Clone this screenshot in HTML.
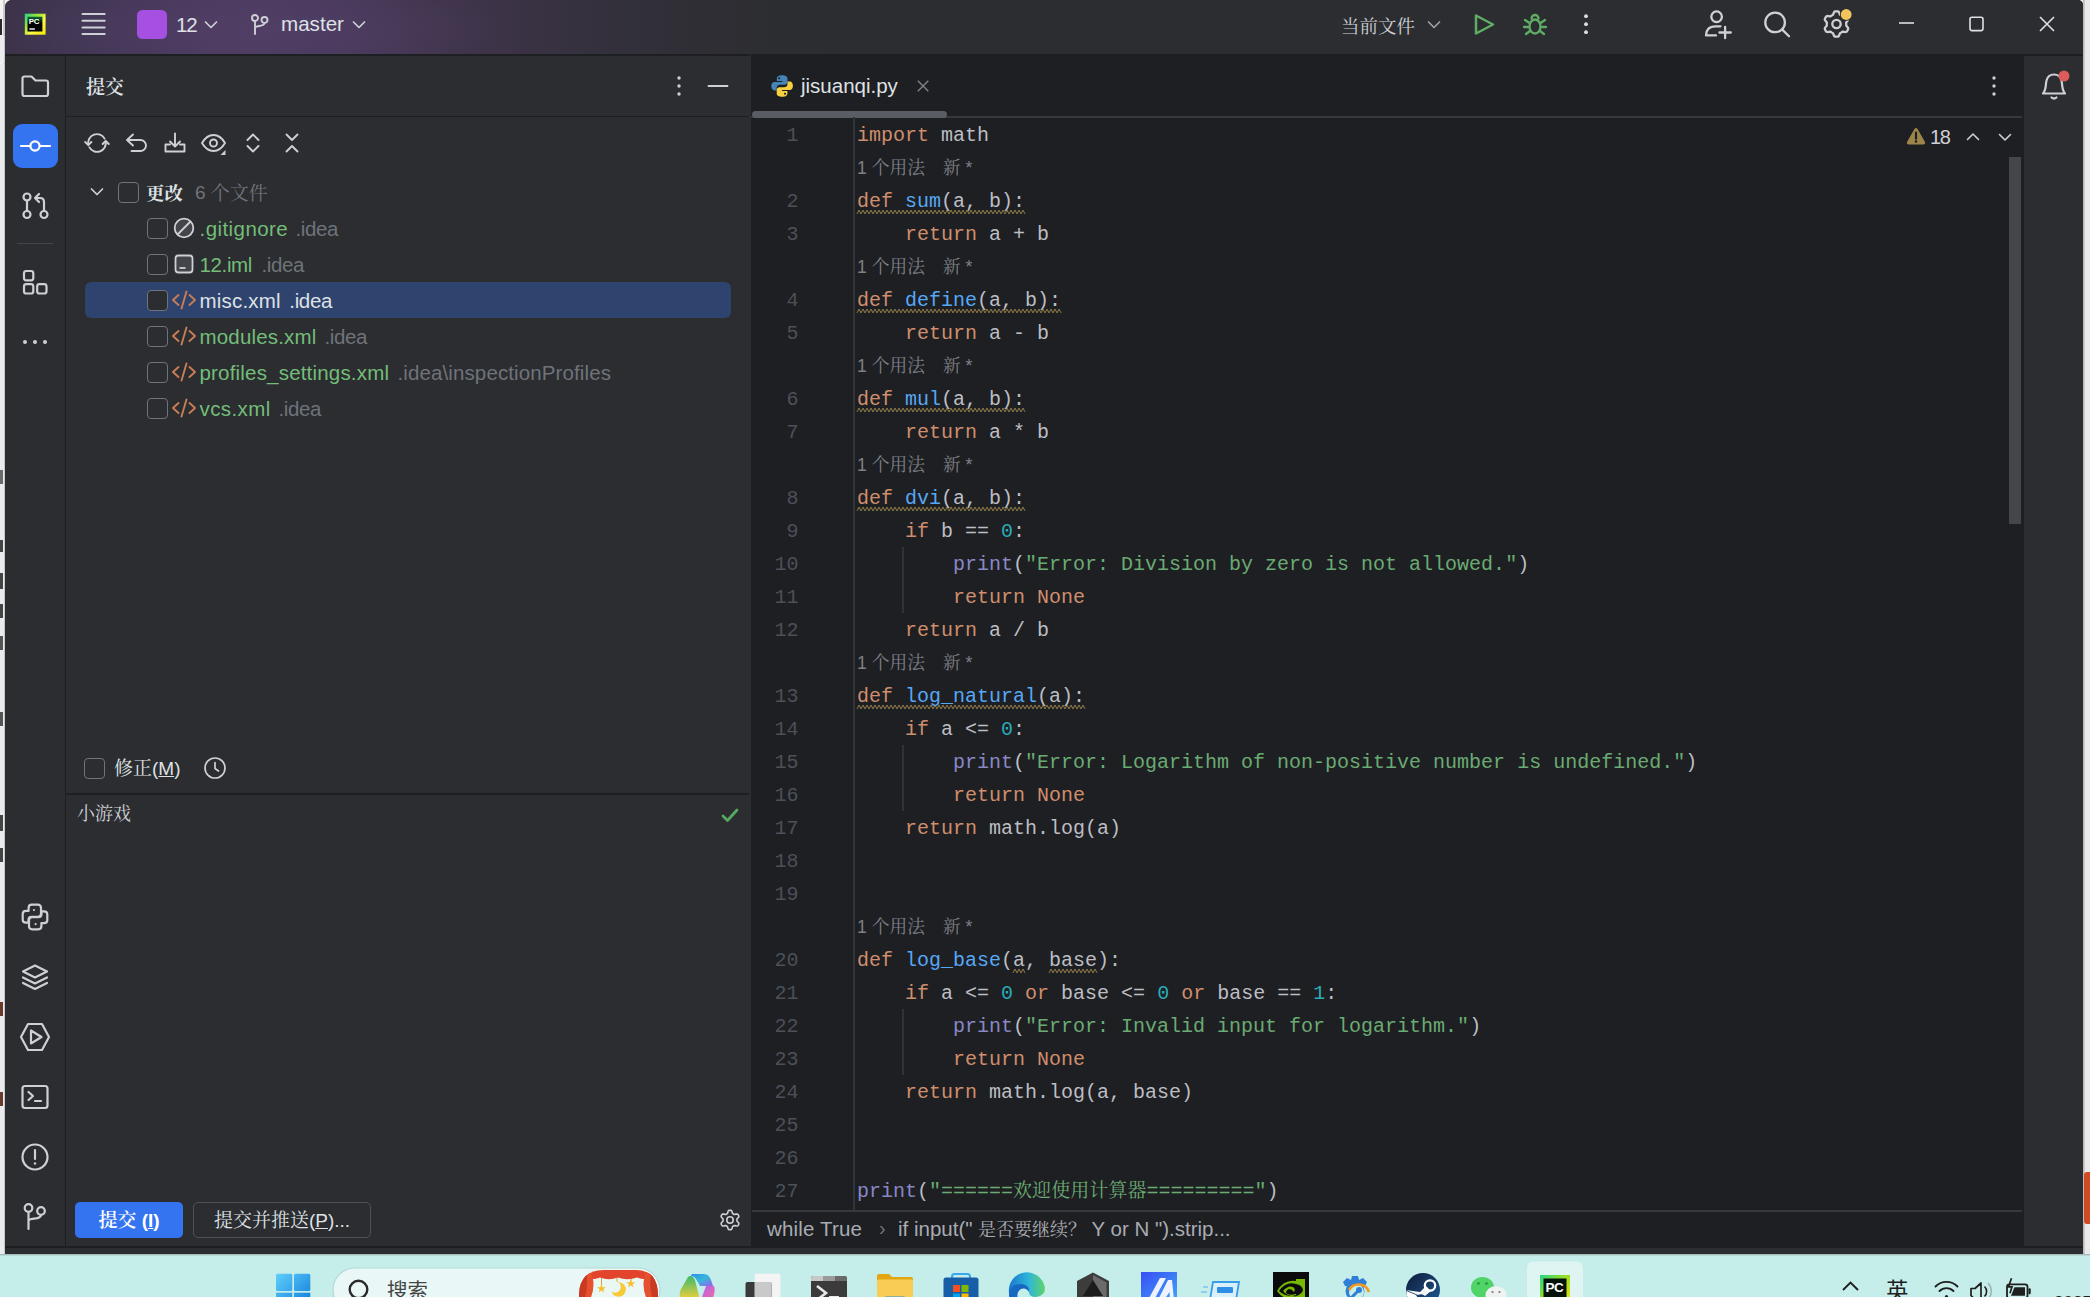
<!DOCTYPE html>
<html lang="zh-CN">
<head>
<meta charset="utf-8">
<title>12 – jisuanqi.py</title>
<style>
*{box-sizing:border-box;margin:0;padding:0}
html,body{width:2090px;height:1298px;overflow:hidden}
body{position:relative;background:#c6eeeb;font-family:"Liberation Sans","Noto Serif CJK SC",sans-serif;font-size:20.5px;color:#dfe1e5}
.abs{position:absolute}
svg{position:absolute;overflow:visible}
.ic{fill:none;stroke:#ced0d6;stroke-linecap:round;stroke-linejoin:round}
#deskL{left:0;top:0;width:14px;height:1254px;background:linear-gradient(90deg,#f4f4f4 0,#f4f4f4 3.500px,#cfcfcf 3.500px,#c4c4c4 5px,#f4f4f4 5px)}
#deskR{left:2070px;top:0;width:20px;height:1254px;background:linear-gradient(90deg,#e9e9e9 0,#e9e9e9 13px,#b4b4b4 13px,#cdcdcd 14.700px,#e9e9e9 14.700px)}
#win{left:5px;top:0;width:2078px;height:1254px;background:#2b2d30;border-radius:7px 5px 0 0;overflow:hidden}
#title{left:5px;top:0;width:2078px;height:54px;background:radial-gradient(ellipse 260px 40px at 245px 30px,rgba(84,64,106,.5) 0,rgba(84,64,106,0) 100%),linear-gradient(90deg,#3c3349 0,#3f3550 40px,#453858 120px,#4c3b60 200px,#4d3c61 260px,#493a5c 340px,#42364f 430px,#3a3244 520px,#33303b 610px,#2e2e34 710px,#2b2d30 820px)}
#strip{left:5px;top:54px;width:61px;height:1200px;background:#2b2d30;border-right:1px solid #1e1f22}
#commit{left:66px;top:54px;width:685px;height:1194px;background:#2b2d30}
#editor{left:751px;top:54px;width:1272px;height:1194px;background:#1e1f22}
#rstrip{left:2023px;top:54px;width:60px;height:1200px;background:#2b2d30;border-left:1px solid #1e1f22}
.t{position:absolute;white-space:pre;line-height:30px;height:30px}
.cjk{font-family:"Liberation Sans","Noto Serif CJK SC",serif}
.gray{color:#6f737a}
.green{color:#73bd79}
.cb{position:absolute;width:21px;height:21px;border:1.5px solid #6f737a;border-radius:4px;background:#2b2d30}
/* code */
#code{left:0;top:65px;width:1271px;height:1092px;font-family:"Liberation Mono","Noto Serif CJK SC",monospace;font-size:20px;color:#bcbec4}
.ln{position:absolute;left:0;width:1271px;height:33px;line-height:33px;white-space:pre}
.ln b{position:absolute;left:0;width:47.500px;text-align:right;font-weight:normal;color:#4b5059}
.ln i{position:absolute;left:106px;font-style:normal}
.k{color:#cf8e6d}.f{color:#56a8f5}.s{color:#6aab73}.n{color:#2aacb8}.p{color:#8888c6}
.h{font-family:"Liberation Sans","Noto Serif CJK SC",serif;font-size:17.700px;color:#7d8088}
.c{font-size:19px;letter-spacing:.07px}
.w{text-decoration:underline wavy #a68a4d 1px;text-underline-offset:5px}
</style>
</head>
<body>
<div id="deskL" class="abs"></div>
<div id="deskR" class="abs"></div>
<div class="abs" style="left:2084px;top:1172px;width:6px;height:52px;background:#d04a24;border-radius:3px 0 0 3px"></div>
<div class="abs" style="left:5px;top:54px;width:2078px;height:1.500px;background:#1e1f22;z-index:0"></div>
<div class="abs" style="left:0;top:19px;width:2px;height:16px;background:#2a2a2a"></div>
<div class="abs" style="left:0;top:145px;width:3.500px;height:3px;background:#222"></div>
<div class="abs" style="left:0;top:168px;width:3.500px;height:3px;background:#222"></div>
<div class="abs" style="left:0;top:334px;width:3px;height:15px;background:#2a3c6a"></div>
<div class="abs" style="left:0;top:36px;width:3.500px;height:27px;background:#ececef"></div>
<div class="abs" style="left:0;top:64px;width:3.500px;height:1190px;background:#ebebee"></div>
<div class="abs" style="left:0;top:470px;width:3px;height:14px;background:#6a6a6a"></div>
<div class="abs" style="left:0;top:540px;width:3px;height:12px;background:#444"></div>
<div class="abs" style="left:0;top:573px;width:3px;height:16px;background:#444"></div>
<div class="abs" style="left:0;top:604px;width:3px;height:14px;background:#444"></div>
<div class="abs" style="left:0;top:636px;width:3px;height:14px;background:#555"></div>
<div class="abs" style="left:0;top:712px;width:3px;height:14px;background:#555"></div>
<div class="abs" style="left:0;top:815px;width:3px;height:16px;background:#444"></div>
<div class="abs" style="left:0;top:848px;width:3px;height:14px;background:#444"></div>
<div class="abs" style="left:0;top:1002px;width:3px;height:14px;background:#6a3a2a"></div>
<div class="abs" style="left:0;top:1092px;width:3px;height:14px;background:#6a3a2a"></div>

<div id="win" class="abs"><div id="w" class="abs" style="left:-5px;top:0;width:2090px;height:1298px">
<div id="title" class="abs"></div>
<div id="strip" class="abs"></div>
<div id="commit" class="abs">
<!--COMMIT-->
</div>
<div id="editor" class="abs">
<div class="abs" style="left:0;top:62px;width:1271px;height:2px;background:#36383c"></div>
<div class="abs" style="left:1px;top:57px;width:195px;height:6.500px;border-radius:3.500px;background:#5a5d63"></div>
<div class="abs" style="left:102px;top:63px;width:2px;height:1094px;background:#313438"></div>
<div class="abs" style="left:151px;top:492.500px;width:2px;height:66px;background:#2f3236"></div>
<div class="abs" style="left:151px;top:690.500px;width:2px;height:66px;background:#2f3236"></div>
<div class="abs" style="left:151px;top:954.500px;width:2px;height:66px;background:#2f3236"></div>
<div class="abs" style="left:1258px;top:103px;width:12px;height:367px;background:#444649"></div>
<div id="code" class="abs">
<div class="ln" style="top:0px"><b>1</b><i><span class="k">import</span> math</i></div>
<div class="ln h" style="top:33px"><i>1 个用法</i><i style="left:192px">新 *</i></div>
<div class="ln" style="top:66px"><b>2</b><i><span class="k">def</span> <span class="f">sum</span>(a, b):</i></div>
<div class="ln" style="top:99px"><b>3</b><i>    <span class="k">return</span> a + b</i></div>
<div class="ln h" style="top:132px"><i>1 个用法</i><i style="left:192px">新 *</i></div>
<div class="ln" style="top:165px"><b>4</b><i><span class="k">def</span> <span class="f">define</span>(a, b):</i></div>
<div class="ln" style="top:198px"><b>5</b><i>    <span class="k">return</span> a - b</i></div>
<div class="ln h" style="top:231px"><i>1 个用法</i><i style="left:192px">新 *</i></div>
<div class="ln" style="top:264px"><b>6</b><i><span class="k">def</span> <span class="f">mul</span>(a, b):</i></div>
<div class="ln" style="top:297px"><b>7</b><i>    <span class="k">return</span> a * b</i></div>
<div class="ln h" style="top:330px"><i>1 个用法</i><i style="left:192px">新 *</i></div>
<div class="ln" style="top:363px"><b>8</b><i><span class="k">def</span> <span class="f">dvi</span>(a, b):</i></div>
<div class="ln" style="top:396px"><b>9</b><i>    <span class="k">if</span> b == <span class="n">0</span>:</i></div>
<div class="ln" style="top:429px"><b>10</b><i>        <span class="p">print</span>(<span class="s">"Error: Division by zero is not allowed."</span>)</i></div>
<div class="ln" style="top:462px"><b>11</b><i>        <span class="k">return</span> <span class="k">None</span></i></div>
<div class="ln" style="top:495px"><b>12</b><i>    <span class="k">return</span> a / b</i></div>
<div class="ln h" style="top:528px"><i>1 个用法</i><i style="left:192px">新 *</i></div>
<div class="ln" style="top:561px"><b>13</b><i><span class="k">def</span> <span class="f">log_natural</span>(a):</i></div>
<div class="ln" style="top:594px"><b>14</b><i>    <span class="k">if</span> a &lt;= <span class="n">0</span>:</i></div>
<div class="ln" style="top:627px"><b>15</b><i>        <span class="p">print</span>(<span class="s">"Error: Logarithm of non-positive number is undefined."</span>)</i></div>
<div class="ln" style="top:660px"><b>16</b><i>        <span class="k">return</span> <span class="k">None</span></i></div>
<div class="ln" style="top:693px"><b>17</b><i>    <span class="k">return</span> math.log(a)</i></div>
<div class="ln" style="top:726px"><b>18</b><i></i></div>
<div class="ln" style="top:759px"><b>19</b><i></i></div>
<div class="ln h" style="top:792px"><i>1 个用法</i><i style="left:192px">新 *</i></div>
<div class="ln" style="top:825px"><b>20</b><i><span class="k">def</span> <span class="f">log_base</span>(a, base):</i></div>
<div class="ln" style="top:858px"><b>21</b><i>    <span class="k">if</span> a &lt;= <span class="n">0</span> <span class="k">or</span> base &lt;= <span class="n">0</span> <span class="k">or</span> base == <span class="n">1</span>:</i></div>
<div class="ln" style="top:891px"><b>22</b><i>        <span class="p">print</span>(<span class="s">"Error: Invalid input for logarithm."</span>)</i></div>
<div class="ln" style="top:924px"><b>23</b><i>        <span class="k">return</span> <span class="k">None</span></i></div>
<div class="ln" style="top:957px"><b>24</b><i>    <span class="k">return</span> math.log(a, base)</i></div>
<div class="ln" style="top:990px"><b>25</b><i></i></div>
<div class="ln" style="top:1023px"><b>26</b><i></i></div>
<div class="ln" style="top:1056px"><b>27</b><i><span class="p">print</span>(<span class="s">"======<span class="c">欢迎使用计算器</span>========="</span>)</i></div>
</div>
<div class="abs" style="left:1px;top:1156px;width:1270px;height:2px;background:#36383c"></div>
<div class="abs" style="left:0;top:1158px;width:1272px;height:36px;background:#1e1f22"></div>
<!--EDITOR-->
</div>
<div id="rstrip" class="abs"></div>
<div class="abs" style="left:5px;top:54px;width:745px;height:2px;background:#1e1f22"></div>
<div class="t" style="left:176px;top:10px;font-size:20.500px;letter-spacing:-1.200px">12</div>
<div class="t" style="left:281px;top:9px;font-size:20.600px">master</div>
<div class="t cjk" style="left:1341px;top:11.500px;font-size:18.500px;color:#ced0d6">当前文件</div>
<!-- commit panel -->
<div class="t cjk" style="left:86px;top:72.500px;font-size:19px;font-weight:600">提交</div>
<div class="abs" style="left:66px;top:116px;width:683px;height:1px;background:#1e1f22"></div>
<div class="abs" style="left:85px;top:282px;width:646px;height:36px;border-radius:6px;background:#2e436e"></div>
<div class="cb" style="left:118px;top:182px"></div>
<div class="t cjk" style="left:146px;top:179px;font-size:18.500px;font-weight:bold">更改</div>
<div class="t cjk gray" style="left:195px;top:178px;font-size:19px;letter-spacing:0">6 <span style="position:relative;top:1px">个文件</span></div>
<div class="cb" style="left:146.500px;top:218px"></div>
<div class="t green" style="left:199.500px;top:214px;letter-spacing:0.437px">.gitignore</div>
<div class="t gray" style="left:295.5px;top:214px;letter-spacing:-0.390px">.idea</div>
<div class="cb" style="left:146.500px;top:254px"></div>
<div class="t green" style="left:199.500px;top:250px;letter-spacing:-0.363px">12.iml</div>
<div class="t gray" style="left:261.5px;top:250px;letter-spacing:-0.390px">.idea</div>
<div class="cb" style="left:146.500px;top:290px"></div>
<div class="t " style="left:199.500px;top:286px;letter-spacing:0.199px">misc.xml</div>
<div class="t" style="left:289.3px;top:286px;letter-spacing:-0.350px">.idea</div>
<div class="cb" style="left:146.500px;top:326px"></div>
<div class="t green" style="left:199.500px;top:322px;letter-spacing:0.168px">modules.xml</div>
<div class="t gray" style="left:324.5px;top:322px;letter-spacing:-0.390px">.idea</div>
<div class="cb" style="left:146.500px;top:362px"></div>
<div class="t green" style="left:199.500px;top:358px;letter-spacing:0.190px">profiles_settings.xml</div>
<div class="t gray" style="left:397.5px;top:358px;letter-spacing:0.112px">.idea\inspectionProfiles</div>
<div class="cb" style="left:146.500px;top:398px"></div>
<div class="t green" style="left:199.500px;top:394px;letter-spacing:0.396px">vcs.xml</div>
<div class="t gray" style="left:278.5px;top:394px;letter-spacing:-0.390px">.idea</div>
<div class="cb" style="left:84px;top:758px"></div>
<div class="t cjk" style="left:114px;top:754px;font-size:19px">修正(<u>M</u>)</div>
<div class="abs" style="left:66px;top:793px;width:683px;height:1.500px;background:#1e1f22"></div>
<div class="t cjk" style="left:77px;top:798.500px;font-size:18px;color:#ced0d6">小游戏</div>
<div class="abs" style="left:75px;top:1202px;width:108px;height:36px;border-radius:5px;background:#3574f0"></div>
<div class="t cjk" style="left:129px;top:1206px;font-size:19px;font-weight:600;color:#fff;transform:translateX(-50%)">提交 (<u>I</u>)</div>
<div class="abs" style="left:193px;top:1202px;width:178px;height:36px;border-radius:5px;border:1.500px solid #4e5157"></div>
<div class="t cjk" style="left:282px;top:1206px;font-size:19px;transform:translateX(-50%)">提交并推送(<u>P</u>)...</div>
<div class="t" style="left:801px;top:71px;font-size:20.500px">jisuanqi.py</div>
<div class="t" style="left:1930px;top:122px;font-size:20px;letter-spacing:-1.300px;color:#ced0d6">18</div>
<div class="t" style="left:767px;top:1214px;letter-spacing:.157px;color:#a8acb3">while True</div>
<div class="t" style="left:879px;top:1213px;color:#6f737a;font-size:20px">›</div>
<div class="t" style="left:898px;top:1214px;color:#a8acb3">if input("</div>
<div class="t cjk" style="left:978px;top:1215px;font-size:18px;color:#a8acb3">是否要继续？</div>
<div class="t" style="left:1091.500px;top:1214px;color:#a8acb3">Y or N ").strip...</div>
<div class="abs" style="left:5px;top:1246px;width:2078px;height:2px;background:#1e1f22"></div>
<div class="abs" style="left:5px;top:1248px;width:2078px;height:6px;background:#2b2d30"></div>
<div class="abs" style="left:2024px;top:54px;width:59px;height:1.500px;background:#1e1f22"></div>
<!--TEXT-->
<svg id="icons" width="2090" height="1298" viewBox="0 0 2090 1298" style="left:0;top:0">
<!-- title bar -->
<g id="pclogo"><defs><linearGradient id="pcg" x1="0" y1="0" x2="1" y2="1"><stop offset="0" stop-color="#21d789"/><stop offset=".35" stop-color="#9fe436"/><stop offset=".6" stop-color="#fcf84a"/><stop offset="1" stop-color="#f3e600"/></linearGradient><linearGradient id="pck" x1="0" y1="0" x2="0" y2="1"><stop offset="0" stop-color="#0a6d3a"/><stop offset=".45" stop-color="#000"/></linearGradient></defs>
<rect x="24.8" y="13.7" width="20.8" height="21" fill="url(#pcg)"/><rect x="27.5" y="16.7" width="14.9" height="14.8" fill="url(#pck)"/><rect x="29.3" y="28.2" width="5.6" height="1.6" fill="#d8d8d8"/><text x="28.8" y="24" font-family="Liberation Sans,sans-serif" font-weight="bold" font-size="7.9" fill="#fff" letter-spacing="-.2">PC</text></g>
<g stroke="#ced0d6" stroke-width="2" stroke-linecap="round"><path d="M82.500 14H104.700M82.500 20.700H104.700M82.500 27.400H104.700M82.500 34.100H104.700"/></g>
<rect x="137" y="10" width="30" height="29" rx="5.5" fill="#a550e0"/>
<g class="ic" stroke-width="1.7"><path d="M205.500 22 L211 27.5 L216.500 22"/><path d="M353.500 22 L359 27.5 L364.500 22"/><path d="M1428.500 22 L1434 27.5 L1439.500 22" stroke="#9da0a8"/></g>
<g class="ic" transform="translate(259,24)" stroke-width="1.9"><circle cx="-4" cy="-6" r="3"/><circle cx="5.500" cy="-4" r="3"/><path d="M-4 -3V10M-4 4C-4 1 5.500 3 5.500 -1"/></g>
<path d="M1476 15.500 L1493 24.500 L1476 33.500Z" fill="none" stroke="#5fad65" stroke-width="2.5" stroke-linejoin="round"/>
<g transform="translate(1535,24)" fill="none" stroke="#5fad65" stroke-width="2.3" stroke-linecap="round"><ellipse cx="0" cy="2.500" rx="5.500" ry="7"/><path d="M-3.500 -5.500A3.500 3.500 0 0 1 3.500 -5.500M-5.500 -1L-10 -4M5.500 -1L10 -4M-6 3H-11M6 3H11M-5 7L-9 10M5 7L9 10"/></g>
<g fill="#dfe1e5"><circle cx="1586" cy="16.200" r="1.900"/><circle cx="1586" cy="24.200" r="1.900"/><circle cx="1586" cy="32.200" r="1.900"/></g>
<g class="ic" transform="translate(1717,24)" stroke-width="2.3"><circle cx="-.4" cy="-7.3" r="5.3"/><path d="M-11 11.4C-11 6 -8 2.3 -1.500 2.300H3.500M-11 11.400H-1M8.100 2.800V14.200M2.400 8.500H13.800"/></g>
<g class="ic" stroke-width="2.3"><circle cx="1775.100" cy="22.400" r="9.800"/><path d="M1782.300 29.600L1789 36.300"/></g>
<g class="ic" transform="translate(1836.500,24)" stroke-width="2.3"><circle cx="0" cy="0" r="4.200"/><path d="M0.00 -12.70L0.83 -12.67L1.66 -12.59L2.38 -11.94L2.90 -10.82L3.29 -9.68L3.71 -8.96L4.29 -8.70L4.85 -8.40L5.39 -8.07L5.90 -7.70L6.74 -7.69L7.92 -7.92L9.15 -8.03L10.08 -7.73L10.56 -7.06L11.00 -6.35L11.39 -5.62L11.73 -4.86L11.53 -3.91L10.82 -2.90L10.03 -1.99L9.62 -1.27L9.68 -0.63L9.70 -0.00L9.68 0.63L9.62 1.27L10.03 1.99L10.82 2.90L11.53 3.91L11.73 4.86L11.39 5.62L11.00 6.35L10.56 7.06L10.08 7.73L9.15 8.03L7.92 7.92L6.74 7.69L5.90 7.70L5.39 8.07L4.85 8.40L4.29 8.70L3.71 8.96L3.29 9.68L2.90 10.82L2.38 11.94L1.66 12.59L0.83 12.67L0.00 12.70L-0.83 12.67L-1.66 12.59L-2.38 11.94L-2.90 10.82L-3.29 9.68L-3.71 8.96L-4.29 8.70L-4.85 8.40L-5.39 8.07L-5.90 7.70L-6.74 7.69L-7.92 7.92L-9.15 8.03L-10.08 7.73L-10.56 7.06L-11.00 6.35L-11.39 5.62L-11.73 4.86L-11.53 3.91L-10.82 2.90L-10.03 1.99L-9.62 1.27L-9.68 0.63L-9.70 0.00L-9.68 -0.63L-9.62 -1.27L-10.03 -1.99L-10.82 -2.90L-11.53 -3.91L-11.73 -4.86L-11.39 -5.62L-11.00 -6.35L-10.56 -7.06L-10.08 -7.73L-9.15 -8.03L-7.92 -7.92L-6.74 -7.69L-5.90 -7.70L-5.39 -8.07L-4.85 -8.40L-4.29 -8.70L-3.71 -8.96L-3.29 -9.68L-2.90 -10.82L-2.38 -11.94L-1.66 -12.59L-0.83 -12.67Z"/></g>
<circle cx="1846.200" cy="14.500" r="6.300" fill="#2b2d30"/><circle cx="1846.200" cy="14.500" r="5.400" fill="#f2c55c"/>
<g stroke="#dfe1e5" stroke-width="1.600" fill="none"><path d="M1899 23H1914"/><rect x="1970" y="17.300" width="13" height="13.300" rx="2"/><path d="M2040 17L2054 31M2054 17L2040 31"/></g>
<!-- left strip -->
<g class="ic" stroke-width="2.2"><path d="M22.500 78.500a2 2 0 0 1 2-2h7l4 4h10.500a2 2 0 0 1 2 2v11.500a2 2 0 0 1-2 2h-21.500a2 2 0 0 1-2-2z"/></g>
<rect x="13" y="124" width="45" height="44" rx="9" fill="#3574f0"/>
<g stroke="#fff" stroke-width="2.200" fill="none" stroke-linecap="round"><circle cx="35" cy="146" r="4.600"/><path d="M21 146H30M40 146H50"/></g>
<g class="ic" transform="translate(35,206)" stroke-width="2.2"><circle cx="-8" cy="-9" r="3.500"/><circle cx="-8" cy="8.500" r="3.500"/><circle cx="9" cy="8.500" r="3.500"/><path d="M-8 -5.500V5M9 5V-4Q9 -8 5 -8H0M4 -12L0 -8L4 -4"/></g>
<path d="M17 243.500H53" stroke="#43454a" stroke-width="1"/>
<g class="ic" stroke-width="2.2"><rect x="24" y="271" width="9.300" height="9.300" rx="2.300"/><rect x="24" y="284.200" width="9.300" height="9.300" rx="2.300"/><rect x="37.200" y="284.200" width="9.300" height="9.300" rx="2.300"/></g>
<g fill="#ced0d6"><circle cx="25" cy="342" r="2"/><circle cx="35" cy="342" r="2"/><circle cx="45" cy="342" r="2"/></g>
<!-- commit panel header -->
<g fill="#ced0d6"><circle cx="679" cy="78" r="1.700"/><circle cx="679" cy="86" r="1.700"/><circle cx="679" cy="94" r="1.700"/></g>
<path d="M708.500 86H727.500" stroke="#ced0d6" stroke-width="1.800" stroke-linecap="round"/>
<!-- commit toolbar -->
<g class="ic" transform="translate(97,143)" stroke-width="1.9"><path d="M-8.700 1.500A8.800 8.800 0 0 1 7.600 -4.400M8.700 -1.500A8.800 8.800 0 0 1 -7.600 4.400M-11.800 -1L-8.700 2.200L-5.600 -1M5.600 1L8.700 -2.200L11.800 1"/></g>
<g class="ic" transform="translate(136.500,143)" stroke-width="1.9"><path d="M-3.500 -8.500L-9.500 -3L-3.500 2.500M-9.500 -3H4A5.500 5.500 0 0 1 4 8H-5"/></g>
<g class="ic" transform="translate(175,143)" stroke-width="1.9"><path d="M0 -9.500V3M-5 -1.500L0 3.500L5 -1.500M-9.500 1.500V8.500H9.500V1.500M-9.500 1.500H-5M9.500 1.500H5"/></g>
<g class="ic" transform="translate(213.500,143)" stroke-width="1.9"><path d="M-11.500 0C-8 -6 -4 -8 0 -8C4 -8 8 -6 11.500 0C8 6 4 8 0 8C-4 8 -8 6 -11.500 0Z"/><circle cx="0" cy="0" r="3.500"/><path d="M12 7V12H7Z" fill="#ced0d6" stroke="none"/></g>
<g class="ic" transform="translate(253,143)" stroke-width="1.9"><path d="M-5.500 -3L0 -8.500L5.500 -3M-5.500 3L0 8.500L5.500 3"/></g>
<g class="ic" transform="translate(292,143)" stroke-width="1.9"><path d="M-5.500 -8.500L0 -3L5.500 -8.500M-5.500 8.500L0 3L5.500 8.500"/></g>
<!-- tree -->
<path class="ic" d="M91.500 189L97 194.500L102.500 189" stroke-width="1.700"/>
<g transform="translate(184,228)"><circle r="9.300" fill="#43454a" stroke="#ced0d6" stroke-width="1.800"/><path d="M-6.500 6.500L6.500 -6.500" stroke="#ced0d6" stroke-width="1.800"/></g>
<g transform="translate(184,264)"><rect x="-8.500" y="-8.500" width="17" height="17" rx="3" fill="#43454a" stroke="#ced0d6" stroke-width="1.800"/><path d="M-4.500 4H1.500" stroke="#ced0d6" stroke-width="1.800"/></g>
<defs><g id="xmlic" fill="none" stroke="#c77d55" stroke-width="1.900" stroke-linecap="round" stroke-linejoin="round"><path d="M-5.500 -5L-11 0L-5.500 5M5.500 -5L11 0L5.500 5M2.500 -8.500L-2.500 8.500"/></g></defs>
<use href="#xmlic" x="184" y="300"/><use href="#xmlic" x="184" y="336"/><use href="#xmlic" x="184" y="372"/><use href="#xmlic" x="184" y="408"/>
<!-- amend -->
<g class="ic" transform="translate(215,768)" stroke-width="1.700"><circle r="10"/><path d="M0 -5.500V0.500L3.500 3"/></g>
<path d="M723 816L727.500 820.500L737 810" fill="none" stroke="#57a85e" stroke-width="2.800" stroke-linecap="round" stroke-linejoin="round"/>
<g class="ic" transform="translate(730,1220)" stroke-width="1.600"><circle r="3.200"/><path d="M0.00 -9.70L0.85 -9.66L1.64 -9.28L2.15 -8.02L2.46 -6.75L2.92 -6.25L3.45 -5.98L3.96 -5.65L4.62 -5.50L5.87 -5.87L7.22 -6.06L7.95 -5.56L8.40 -4.85L8.79 -4.10L8.85 -3.22L8.02 -2.15L7.07 -1.25L6.87 -0.60L6.90 -0.00L6.87 0.60L7.07 1.25L8.02 2.15L8.85 3.22L8.79 4.10L8.40 4.85L7.95 5.56L7.22 6.06L5.87 5.87L4.62 5.50L3.96 5.65L3.45 5.98L2.92 6.25L2.46 6.75L2.15 8.02L1.64 9.28L0.85 9.66L0.00 9.70L-0.85 9.66L-1.64 9.28L-2.15 8.02L-2.46 6.75L-2.92 6.25L-3.45 5.98L-3.96 5.65L-4.62 5.50L-5.87 5.87L-7.22 6.06L-7.95 5.56L-8.40 4.85L-8.79 4.10L-8.85 3.22L-8.02 2.15L-7.07 1.25L-6.87 0.60L-6.90 0.00L-6.87 -0.60L-7.07 -1.25L-8.02 -2.15L-8.85 -3.22L-8.79 -4.10L-8.40 -4.85L-7.95 -5.56L-7.22 -6.06L-5.87 -5.87L-4.62 -5.50L-3.96 -5.65L-3.45 -5.98L-2.92 -6.25L-2.46 -6.75L-2.15 -8.02L-1.64 -9.28L-0.85 -9.66Z"/></g>
<!-- strip bottom -->
<g class="ic" transform="translate(35,917)" stroke-width="2.2"><path d="M-6.4 -6.1V-9Q-6.4 -12.3 -3.2 -12.3H2.8Q6 -12.3 6 -9.2V-3.2Q6 -.2 3 -.2H-3.3Q-6.5 -.2 -6.5 3V5.6H-9Q-12.3 5.6 -12.3 2.4V-2.9Q-12.3 -6.1 -9 -6.1Z"/><path d="M6.4 6.1 V9 Q6.4 12.3 3.2 12.3 H-2.8 Q-6 12.3 -6 9.2 V3.2 Q-6 0.2 -3 0.2 H3.3 Q6.5 0.2 6.5 -3 V-5.6 H9 Q12.3 -5.6 12.3 -2.4 V2.9 Q12.3 6.1 9 6.1 Z"/><circle cx="-1" cy="-7" r="1.1" fill="#ced0d6" stroke="none"/><circle cx=".6" cy="7.1" r="1.1" fill="#ced0d6" stroke="none"/></g>
<g class="ic" transform="translate(35,977)" stroke-width="2.2"><path d="M0 -11.500L12 -5.500L0 0.500L-12 -5.500ZM-12 0.500L0 6.500L12 0.500M-12 6L0 12L12 6"/></g>
<g class="ic" transform="translate(35,1037)" stroke-width="2.2"><path d="M-7 -13H7L14 0L7 13H-7L-14 0ZM-4 -6.500V6.500L6.500 0Z"/></g>
<g class="ic" transform="translate(35,1097)" stroke-width="2.2"><rect x="-12.500" y="-11" width="25" height="22" rx="2.500"/><path d="M-6.500 -5L-2 -1L-6.500 3M0 4H6"/></g>
<g class="ic" transform="translate(35,1157)" stroke-width="2.2"><circle r="12.500"/><path d="M0 -7V2"/><circle cx="0" cy="6.500" r="1.200" fill="#ced0d6" stroke="none"/></g>
<g class="ic" transform="translate(34,1216)" stroke-width="2.2"><circle cx="-5.500" cy="-8" r="3.800"/><circle cx="7" cy="-5" r="3.800"/><path d="M-5.500 -4V13M-5.500 5C-5.500 1 7 4.500 7 -1"/></g>
<!-- right strip -->
<g class="ic" transform="translate(2054,86)" stroke-width="2.2"><path d="M-11 7.500C-7.500 4 -8.500 -2 -7.500 -5.500C-6.500 -9.500 -3.500 -11.500 0 -11.500C3.500 -11.500 6.500 -9.500 7.500 -5.500C8.500 -2 7.500 4 11 7.500Z"/><path d="M-2.500 11.500Q0 13.500 2.500 11.500"/></g>
<circle cx="2064" cy="76" r="5.500" fill="#db5c5c"/>
<!-- editor tab -->
<g transform="translate(771.300,75.200)"><path d="M10.700 0C7.800 0 5.500 .9 5.500 3.300V5.900H11V6.900H3.300C1 6.900 0 8.800 0 10.900C0 13.300 1 15.300 3.300 15.300H5.400V12.500C5.400 10.500 6.900 9.500 8.900 9.500H13.300C15.100 9.500 16.200 8.300 16.200 6.600V3.300C16.200 1 13.800 0 10.700 0Z" fill="#4584b6"/><circle cx="7.900" cy="3.100" r="1.050" fill="#1e1f22"/><path d="M10.900 21.600C13.800 21.600 16.100 20.700 16.100 18.300V15.700H10.600V14.700H18.300C20.600 14.700 21.600 12.800 21.600 10.700C21.600 8.300 20.600 6.300 18.300 6.300H16.200V9.100C16.200 11.100 14.700 12.100 12.700 12.100H8.300C6.500 12.100 5.400 13.300 5.400 15V18.300C5.400 20.600 7.800 21.600 10.900 21.600Z" fill="#f7d03e"/><circle cx="13.700" cy="18.500" r="1.050" fill="#1e1f22"/></g>
<path d="M917.800 80.700L928.300 91.300M928.300 80.700L917.800 91.300" stroke="#7e8289" stroke-width="1.400" fill="none"/>
<g fill="#ced0d6"><circle cx="1994" cy="78" r="1.700"/><circle cx="1994" cy="86" r="1.700"/><circle cx="1994" cy="94" r="1.700"/></g>
<!-- warnings -->
<path d="M1914.300 129.300Q1916 126.800 1917.700 129.300L1924.700 141.500Q1926 144.300 1923 144.500H1909Q1906 144.300 1907.300 141.500Z" fill="#9c8549"/>
<path d="M1916 132.500V138.800" stroke="#1e1f22" stroke-width="2.200" stroke-linecap="round"/><circle cx="1916" cy="141.600" r="1.250" fill="#1e1f22"/>
<g class="ic" stroke-width="1.600"><path d="M1967.500 139.500L1973 134L1978.500 139.500M1999.500 134.500L2005 140L2010.500 134.500"/></g>
<!-- wavy underlines -->
<g fill="none" stroke="#b89e58" stroke-width=".75" stroke-linejoin="round"><path d="M857 213.9L859 210.1L861 213.9L863 210.1L865 213.9L867 210.1L869 213.9L871 210.1L873 213.9L875 210.1L877 213.9L879 210.1L881 213.9L883 210.1L885 213.9L887 210.1L889 213.9L891 210.1L893 213.9L895 210.1L897 213.9L899 210.1L901 213.9L903 210.1L905 213.9L907 210.1L909 213.9L911 210.1L913 213.9L915 210.1L917 213.9L919 210.1L921 213.9L923 210.1L925 213.9L927 210.1L929 213.9L931 210.1L933 213.9L935 210.1L937 213.9L939 210.1L941 213.9L943 210.1L945 213.9L947 210.1L949 213.9L951 210.1L953 213.9L955 210.1L957 213.9L959 210.1L961 213.9L963 210.1L965 213.9L967 210.1L969 213.9L971 210.1L973 213.9L975 210.1L977 213.9L979 210.1L981 213.9L983 210.1L985 213.9L987 210.1L989 213.9L991 210.1L993 213.9L995 210.1L997 213.9L999 210.1L1001 213.9L1003 210.1L1005 213.9L1007 210.1L1009 213.9L1011 210.1L1013 213.9L1015 210.1L1017 213.9L1019 210.1L1021 213.9L1023 210.1L1025 213.9"/><path d="M857 312.9L859 309.1L861 312.9L863 309.1L865 312.9L867 309.1L869 312.9L871 309.1L873 312.9L875 309.1L877 312.9L879 309.1L881 312.9L883 309.1L885 312.9L887 309.1L889 312.9L891 309.1L893 312.9L895 309.1L897 312.9L899 309.1L901 312.9L903 309.1L905 312.9L907 309.1L909 312.9L911 309.1L913 312.9L915 309.1L917 312.9L919 309.1L921 312.9L923 309.1L925 312.9L927 309.1L929 312.9L931 309.1L933 312.9L935 309.1L937 312.9L939 309.1L941 312.9L943 309.1L945 312.9L947 309.1L949 312.9L951 309.1L953 312.9L955 309.1L957 312.9L959 309.1L961 312.9L963 309.1L965 312.9L967 309.1L969 312.9L971 309.1L973 312.9L975 309.1L977 312.9L979 309.1L981 312.9L983 309.1L985 312.9L987 309.1L989 312.9L991 309.1L993 312.9L995 309.1L997 312.9L999 309.1L1001 312.9L1003 309.1L1005 312.9L1007 309.1L1009 312.9L1011 309.1L1013 312.9L1015 309.1L1017 312.9L1019 309.1L1021 312.9L1023 309.1L1025 312.9L1027 309.1L1029 312.9L1031 309.1L1033 312.9L1035 309.1L1037 312.9L1039 309.1L1041 312.9L1043 309.1L1045 312.9L1047 309.1L1049 312.9L1051 309.1L1053 312.9L1055 309.1L1057 312.9L1059 309.1L1061 312.9"/><path d="M857 411.9L859 408.1L861 411.9L863 408.1L865 411.9L867 408.1L869 411.9L871 408.1L873 411.9L875 408.1L877 411.9L879 408.1L881 411.9L883 408.1L885 411.9L887 408.1L889 411.9L891 408.1L893 411.9L895 408.1L897 411.9L899 408.1L901 411.9L903 408.1L905 411.9L907 408.1L909 411.9L911 408.1L913 411.9L915 408.1L917 411.9L919 408.1L921 411.9L923 408.1L925 411.9L927 408.1L929 411.9L931 408.1L933 411.9L935 408.1L937 411.9L939 408.1L941 411.9L943 408.1L945 411.9L947 408.1L949 411.9L951 408.1L953 411.9L955 408.1L957 411.9L959 408.1L961 411.9L963 408.1L965 411.9L967 408.1L969 411.9L971 408.1L973 411.9L975 408.1L977 411.9L979 408.1L981 411.9L983 408.1L985 411.9L987 408.1L989 411.9L991 408.1L993 411.9L995 408.1L997 411.9L999 408.1L1001 411.9L1003 408.1L1005 411.9L1007 408.1L1009 411.9L1011 408.1L1013 411.9L1015 408.1L1017 411.9L1019 408.1L1021 411.9L1023 408.1L1025 411.9"/><path d="M857 510.9L859 507.1L861 510.9L863 507.1L865 510.9L867 507.1L869 510.9L871 507.1L873 510.9L875 507.1L877 510.9L879 507.1L881 510.9L883 507.1L885 510.9L887 507.1L889 510.9L891 507.1L893 510.9L895 507.1L897 510.9L899 507.1L901 510.9L903 507.1L905 510.9L907 507.1L909 510.9L911 507.1L913 510.9L915 507.1L917 510.9L919 507.1L921 510.9L923 507.1L925 510.9L927 507.1L929 510.9L931 507.1L933 510.9L935 507.1L937 510.9L939 507.1L941 510.9L943 507.1L945 510.9L947 507.1L949 510.9L951 507.1L953 510.9L955 507.1L957 510.9L959 507.1L961 510.9L963 507.1L965 510.9L967 507.1L969 510.9L971 507.1L973 510.9L975 507.1L977 510.9L979 507.1L981 510.9L983 507.1L985 510.9L987 507.1L989 510.9L991 507.1L993 510.9L995 507.1L997 510.9L999 507.1L1001 510.9L1003 507.1L1005 510.9L1007 507.1L1009 510.9L1011 507.1L1013 510.9L1015 507.1L1017 510.9L1019 507.1L1021 510.9L1023 507.1L1025 510.9"/><path d="M857 708.9L859 705.1L861 708.9L863 705.1L865 708.9L867 705.1L869 708.9L871 705.1L873 708.9L875 705.1L877 708.9L879 705.1L881 708.9L883 705.1L885 708.9L887 705.1L889 708.9L891 705.1L893 708.9L895 705.1L897 708.9L899 705.1L901 708.9L903 705.1L905 708.9L907 705.1L909 708.9L911 705.1L913 708.9L915 705.1L917 708.9L919 705.1L921 708.9L923 705.1L925 708.9L927 705.1L929 708.9L931 705.1L933 708.9L935 705.1L937 708.9L939 705.1L941 708.9L943 705.1L945 708.9L947 705.1L949 708.9L951 705.1L953 708.9L955 705.1L957 708.9L959 705.1L961 708.9L963 705.1L965 708.9L967 705.1L969 708.9L971 705.1L973 708.9L975 705.1L977 708.9L979 705.1L981 708.9L983 705.1L985 708.9L987 705.1L989 708.9L991 705.1L993 708.9L995 705.1L997 708.9L999 705.1L1001 708.9L1003 705.1L1005 708.9L1007 705.1L1009 708.9L1011 705.1L1013 708.9L1015 705.1L1017 708.9L1019 705.1L1021 708.9L1023 705.1L1025 708.9L1027 705.1L1029 708.9L1031 705.1L1033 708.9L1035 705.1L1037 708.9L1039 705.1L1041 708.9L1043 705.1L1045 708.9L1047 705.1L1049 708.9L1051 705.1L1053 708.9L1055 705.1L1057 708.9L1059 705.1L1061 708.9L1063 705.1L1065 708.9L1067 705.1L1069 708.9L1071 705.1L1073 708.9L1075 705.1L1077 708.9L1079 705.1L1081 708.9L1083 705.1L1085 708.9"/><path d="M1013 972.9L1015 969.1L1017 972.9L1019 969.1L1021 972.9L1023 969.1L1025 972.9"/><path d="M1049 972.9L1051 969.1L1053 972.9L1055 969.1L1057 972.9L1059 969.1L1061 972.9L1063 969.1L1065 972.9L1067 969.1L1069 972.9L1071 969.1L1073 972.9L1075 969.1L1077 972.9L1079 969.1L1081 972.9L1083 969.1L1085 972.9L1087 969.1L1089 972.9L1091 969.1L1093 972.9L1095 969.1L1097 972.9"/></g>
<!--ICONS-->
</svg>
</div></div>
<div id="taskbar" class="abs" style="left:0;top:1254px;width:2090px;height:44px;background:linear-gradient(180deg,#a3bcb9 0,#a3bcb9 1px,#b8d9d6 1px,#b8d9d6 2px,#c5edea 2px);overflow:hidden">
<svg width="2090" height="44" viewBox="0 1254 2090 44" style="left:0;top:0">
<defs>
<linearGradient id="wl" gradientUnits="userSpaceOnUse" x1="276" y1="1273" x2="312" y2="1309"><stop offset="0" stop-color="#5fd0fb"/><stop offset="1" stop-color="#0a74d8"/></linearGradient>
<linearGradient id="cp1" x1="0" y1="0" x2="1" y2="1"><stop offset="0" stop-color="#2a8cf0"/><stop offset=".5" stop-color="#35b8d8"/><stop offset="1" stop-color="#9a5cf0"/></linearGradient>
<linearGradient id="cp2" x1="0" y1="0" x2="0" y2="1"><stop offset="0" stop-color="#3cb86c"/><stop offset="1" stop-color="#f5d13a"/></linearGradient>
<linearGradient id="cp3" x1="0" y1="0" x2="1" y2="1"><stop offset="0" stop-color="#b060f0"/><stop offset="1" stop-color="#f56aa0"/></linearGradient>
<linearGradient id="edg" x1="0" y1="0" x2="1" y2="0"><stop offset="0" stop-color="#1a78d0"/><stop offset=".55" stop-color="#2fb6d8"/><stop offset="1" stop-color="#5fd46a"/></linearGradient>
<linearGradient id="bl" x1="0" y1="0" x2="1" y2="1"><stop offset="0" stop-color="#3a4df5"/><stop offset="1" stop-color="#3fa6f8"/></linearGradient>
<linearGradient id="stm" x1="0" y1="0" x2="1" y2="1"><stop offset="0" stop-color="#101b3a"/><stop offset="1" stop-color="#1c5c96"/></linearGradient>
<linearGradient id="pcg2" x1="0" y1="0" x2="1" y2="1"><stop offset="0" stop-color="#21d789"/><stop offset=".4" stop-color="#8fdc2e"/><stop offset="1" stop-color="#f3e600"/></linearGradient>
</defs>
<!-- windows logo -->
<rect x="276" y="1273.700" width="16.300" height="17.300" rx="1.500" fill="url(#wl)"/><rect x="294" y="1273.700" width="16.300" height="17.300" rx="1.500" fill="url(#wl)"/><rect x="276" y="1292.700" width="16.300" height="10" fill="url(#wl)"/><rect x="294" y="1292.700" width="16.300" height="10" fill="url(#wl)"/>
<!-- search pill -->
<rect x="333" y="1268" width="327" height="44" rx="22" fill="#e9f8f6" stroke="#b4d9d5" stroke-width="1.200"/>
<circle cx="358.500" cy="1289.500" r="8.800" fill="none" stroke="#2a2a2a" stroke-width="2.400"/>
<text x="387" y="1297.500" font-family="Liberation Sans,Noto Sans CJK SC,sans-serif" font-size="20.500" fill="#454545">搜索</text>
<!-- curtain -->
<clipPath id="cc"><path d="M579 1312V1294Q580 1270 604 1270H636Q658 1270 658 1296V1312Z"/></clipPath>
<g clip-path="url(#cc)"><rect x="579" y="1270" width="80" height="30" fill="#eaf7f5"/><path d="M601.500 1276V1286M630.800 1276V1281M617 1276V1282" stroke="#d9a520" stroke-width="1"/><path d="M601.500 1284L602.700 1287.300H606L603.300 1289.300L604.300 1292.500L601.500 1290.600L598.700 1292.500L599.700 1289.300L597 1287.300H600.300Z" fill="#f5c02c"/><path d="M630.800 1279L632 1282.300H635.300L632.600 1284.300L633.600 1287.500L630.800 1285.600L628 1287.500L629 1284.300L626.300 1282.300H629.600Z" fill="#f5c02c"/><circle cx="618.500" cy="1289.500" r="7.300" fill="#f7c935"/><circle cx="615" cy="1287" r="5.800" fill="#eaf7f5"/><path d="M583 1270H655V1277Q646 1281 637 1277.500Q627 1281 618 1277.500Q609 1281 600 1277.500Q591 1281 583 1277Z" fill="#e2452c"/><path d="M579 1270H590Q597 1284 590 1300H579Z" fill="#e5502f"/><path d="M579 1270H586Q589 1285 584 1300H579Z" fill="#c93a22"/><path d="M658 1270H647Q640 1284 647 1300H658Z" fill="#e5502f"/><path d="M658 1270H652Q648 1285 653 1300H658Z" fill="#c93a22"/></g>
<!-- copilot -->
<path d="M692 1274H704Q709 1274 711 1280L713 1286H700L696 1279Q694 1275 690 1277Z" fill="url(#cp1)"/><path d="M688 1277Q692 1274 695 1280L700 1300H682Q678 1296 681 1289Z" fill="url(#cp2)"/><path d="M701 1300L706 1286H714Q716 1292 712 1300Z" fill="url(#cp3)"/>
<!-- task view -->
<rect x="754.500" y="1273.700" width="26" height="30" rx="2" fill="#f4f4f4"/><rect x="745.500" y="1282" width="26" height="22" rx="2" fill="#3a3a3a"/><rect x="754.500" y="1282" width="17" height="22" fill="#c9c9c9"/>
<!-- terminal -->
<rect x="811" y="1276" width="36" height="28" rx="2.500" fill="#3b3b3b"/><path d="M811 1281V1278.500Q811 1276 813.500 1276H823V1281Z" fill="#c8c8c8"/><rect x="823" y="1276" width="12" height="5" fill="#9a9a9a"/><path d="M835 1276H844.500Q847 1276 847 1278.500V1281H835Z" fill="#6a6a6a"/><path d="M817 1286L826 1293L817 1300" fill="none" stroke="#e8e8e8" stroke-width="2.600"/><rect x="829" y="1296" width="10" height="3" fill="#e8e8e8"/>
<!-- folder -->
<path d="M877 1276Q877 1274 879 1274H889L892 1277H911Q913 1277 913 1279V1300H877Z" fill="#e3a612"/><rect x="877" y="1279.500" width="36" height="22" rx="1.500" fill="#f8cd55"/><rect x="884" y="1296.500" width="22" height="5" rx="2" fill="#2d8ce8"/>
<!-- store -->
<path d="M952 1281V1276.500Q952 1274 954.500 1274H967.500Q970 1274 970 1276.500V1281" fill="none" stroke="#35a8ee" stroke-width="2"/><rect x="943.500" y="1277.500" width="35" height="26" rx="2.500" fill="#175ea6"/><rect x="953" y="1285" width="7" height="7" fill="#f25022"/><rect x="961.500" y="1285" width="7" height="7" fill="#7fba00"/><rect x="953" y="1293.500" width="7" height="7" fill="#00a4ef"/><rect x="961.500" y="1293.500" width="7" height="7" fill="#ffb900"/>
<!-- edge -->
<path d="M1009 1293A18 18 0 0 1 1045 1288Q1045 1296 1036 1297Q1028 1297 1029 1291Q1027 1284 1020 1286Q1013 1290 1017 1300H1011Q1009 1297 1009 1293Z" fill="url(#edg)"/><path d="M1009 1294Q1010 1284 1021 1284Q1030 1285 1029 1292Q1026 1287 1021 1289Q1015 1293 1019 1302H1012Q1009 1298 1009 1294Z" fill="#1668c0"/>
<!-- hex (unity-like) -->
<path d="M1093 1272.500L1109 1281V1300H1077V1281Z" fill="#3c3c3c"/><path d="M1093 1275L1106.500 1282.500V1300H1093Z" fill="#6b6b6b"/><path d="M1093 1280L1103 1296H1083Z" fill="#1c1c1c"/>
<!-- blue slashes -->
<rect x="1141" y="1272" width="36" height="30" fill="url(#bl)"/><path d="M1148 1300L1160 1278H1166L1154 1300ZM1158 1300L1168 1280H1172L1174 1300H1170L1169.500 1292L1164 1300Z" fill="#eef2ff"/>
<!-- window icon -->
<path d="M1213 1282H1239L1236 1300H1210Z" fill="#d9f0fb" stroke="#3a9be6" stroke-width="1.800"/><rect x="1217" y="1287" width="16" height="6" rx="1" fill="#2f8fe6"/><path d="M1208 1287H1203M1207 1292H1201" stroke="#7cc4f2" stroke-width="1.400"/>
<!-- nvidia -->
<rect x="1273" y="1272" width="36" height="30" fill="#0b0b0b"/><path d="M1279 1291Q1286 1281 1296 1284V1281Q1284 1279 1277 1291Q1284 1301 1296 1298V1295Q1287 1298 1279 1291ZM1283 1291Q1288 1285 1293 1287Q1296 1289 1294 1292Q1292 1289 1289 1289Q1286 1290 1286 1293Q1289 1296 1296 1294V1296Q1288 1297 1283 1291Z" fill="#76b900"/><path d="M1296 1279H1305V1300H1296V1296Q1302 1294 1303 1290Q1302 1285 1296 1284Z" fill="#76b900"/>
<!-- gear blue -->
<circle cx="1355" cy="1291" r="9.500" fill="#2f7fd6"/><path d="M1352 1276H1358L1359 1280L1363 1278L1367 1282L1365 1286H1345L1343 1282L1347 1278L1351 1280Z" fill="#2f7fd6"/><circle cx="1356.500" cy="1292" r="7.500" fill="#c5edea"/><path d="M1349 1290A11 11 0 0 1 1369 1292" fill="none" stroke="#f39a1e" stroke-width="2.600"/><path d="M1351 1298L1358 1291" stroke="#2f7fd6" stroke-width="3"/><circle cx="1359" cy="1290" r="3" fill="#2f7fd6"/>
<!-- steam -->
<circle cx="1423" cy="1290" r="17" fill="url(#stm)"/><circle cx="1430" cy="1285.500" r="5.200" fill="none" stroke="#fff" stroke-width="2.300"/><path d="M1406 1290L1418 1295Q1422 1293 1425 1296L1431 1291L1426 1286L1420 1292Z" fill="#fff" opacity=".95"/><path d="M1406.500 1291L1416 1295Q1419 1299 1416 1302H1411Q1406 1297 1406.500 1291Z" fill="#fff"/>
<!-- wechat -->
<ellipse cx="1482.500" cy="1287.500" rx="11.500" ry="10.500" fill="#50d468"/><circle cx="1478.500" cy="1283.500" r="1.300" fill="#2b8f3e"/><circle cx="1486.500" cy="1283.500" r="1.300" fill="#2b8f3e"/><ellipse cx="1496" cy="1295" rx="10.500" ry="9" fill="#eef3f1"/><circle cx="1492.500" cy="1292" r="1.100" fill="#777"/><circle cx="1499.500" cy="1292" r="1.100" fill="#777"/>
<!-- pycharm active -->
<rect x="1527" y="1261.500" width="56" height="50" rx="6" fill="#def5f2"/>
<rect x="1540" y="1275" width="30" height="30" fill="url(#pcg2)"/><rect x="1543.500" y="1278.500" width="23" height="26" fill="#05130c"/><text x="1545.500" y="1292" font-family="Liberation Sans,sans-serif" font-weight="bold" font-size="13.500" fill="#fff" letter-spacing="-.4">PC</text>
<!-- tray -->
<path d="M1843 1290L1850.500 1282.500L1858 1290" fill="none" stroke="#1f1f1f" stroke-width="1.900"/>
<text x="1886" y="1298.500" font-family="Liberation Sans,Noto Sans CJK SC,sans-serif" font-size="22.500" fill="#1f1f1f">英</text>
<g fill="none" stroke="#1f1f1f" stroke-width="1.900" stroke-linecap="round" transform="translate(0,-3)"><path d="M1935.500 1289.500A15.500 15.500 0 0 1 1957.500 1289.500M1939.500 1294A10 10 0 0 1 1953.500 1294"/><circle cx="1946.500" cy="1299.500" r="1.600" fill="#1f1f1f" stroke="none"/></g>
<g transform="translate(0,-2.500)"><path d="M1971 1291H1975L1981 1285.500V1302H1975L1971 1298Z" fill="none" stroke="#1f1f1f" stroke-width="1.700" stroke-linejoin="round"/><path d="M1984.500 1289A7 7 0 0 1 1984.500 1299" fill="none" stroke="#1f1f1f" stroke-width="1.600"/><path d="M1988 1285.500A12 12 0 0 1 1988 1302" fill="none" stroke="#9ab3b0" stroke-width="1.400"/></g>
<g transform="translate(0,-.7)"><rect x="2007" y="1285" width="20.500" height="14" rx="2.500" fill="none" stroke="#1f1f1f" stroke-width="1.800"/><rect x="2028.500" y="1289" width="2.200" height="6" rx="1" fill="#1f1f1f"/><path d="M2011 1296.500L2014.500 1288H2025V1296.500Z" fill="#1f1f1f"/><path d="M2011.500 1279L2008.500 1287.500H2012L2010 1294" fill="none" stroke="#1f1f1f" stroke-width="1.700"/></g>
<text x="2054" y="1307.500" font-family="Liberation Sans,sans-serif" font-size="17" fill="#1f1f1f">2025</text>
</svg>
</div>
<div class="abs" style="left:0;top:1296.800px;width:2090px;height:1.200px;background:#fafdfd"></div>
</body>
</html>
